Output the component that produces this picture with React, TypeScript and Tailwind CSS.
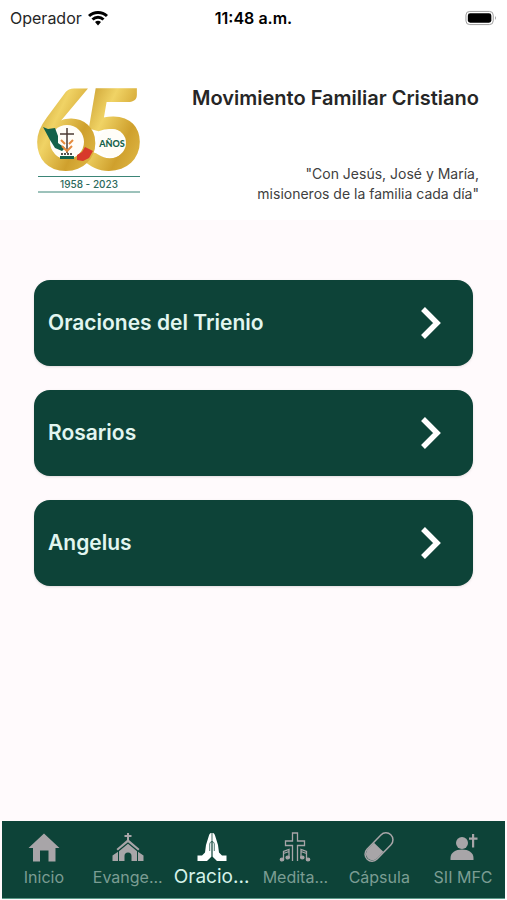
import React from 'react';

type IconProps = { className?: string };

const HomeIcon: React.FC<IconProps> = ({ className }) => (
  <svg viewBox="0 0 32 32" className={className} fill="currentColor" aria-hidden="true">
    <path d="M16 2.500 31.500 17H27.500V30.500H20.500V19.500H12V30.500H5V17H0.500Z" />
  </svg>
);

const ChurchIcon: React.FC<IconProps> = ({ className }) => (
  <svg viewBox="0 0 32 32" className={className} fill="currentColor" aria-hidden="true">
    <path d="M15 2h2v2h2.500v2H17v3l10.500 9-1.300 1.500L16 11.200 5.800 19.500 4.500 18 15 9V6h-2.500V4H15Z" />
    <path d="M16 12.700 25 20.200V30H19.500V25a3.500 3.500 0 0 0-7 0v5H7V20.200Z" />
    <path d="M6 20.800V30H0.500V24.500Z" />
    <path d="M26 20.800V30h5.500V24.500Z" />
  </svg>
);

const PrayIcon: React.FC<IconProps> = ({ className }) => (
  <svg viewBox="0 0 32 32" className={className} fill="currentColor" aria-hidden="true">
    <path d="M15.600 2C14.200 1.500 13.200 3 12.800 5L10 14 9 21.500 6 24.500H1.500V30H11L15.600 25.500Z" />
    <path d="M16.400 2C17.800 1.500 18.800 3 19.200 5L22 14 23 21.500 26 24.500H30.500V30H21L16.400 25.500Z" />
    <path d="M13.700 20V13q0-2 2.300-2.500 2.300.500 2.300 2.500V20M16 10V26" fill="none" stroke="#0d4338" strokeWidth="0.700" />
  </svg>
);

const CrossNotesIcon: React.FC<IconProps> = ({ className }) => (
  <svg viewBox="0 0 32 32" className={className} fill="none" stroke="currentColor" strokeWidth="1.300" aria-hidden="true">
    <path d="M13.500 30V14.500H6.500V10H13.500V2H18.500V10H25.500V14.500H18.500V30" />
    <path d="M4.500 28V20.500L10 18.500V26M4.500 22.500 10 20.500" />
    <path d="M27.500 28V20.500L22 18.500V26M27.500 22.500 22 20.500" />
    <ellipse cx="3" cy="28.500" rx="1.700" ry="1.300" fill="currentColor" />
    <ellipse cx="8.700" cy="26.500" rx="1.700" ry="1.300" fill="currentColor" />
    <ellipse cx="29" cy="28.500" rx="1.700" ry="1.300" fill="currentColor" />
    <ellipse cx="23.300" cy="26.500" rx="1.700" ry="1.300" fill="currentColor" />
  </svg>
);

const PillIcon: React.FC<IconProps> = ({ className }) => (
  <svg viewBox="0 0 32 32" className={className} fill="none" aria-hidden="true">
    <g transform="rotate(-46 16 16)">
      <rect x="-1" y="9" width="34" height="14" rx="7" stroke="currentColor" strokeWidth="1.500" />
      <path d="M15.500 9.500V22.500H6.500a6.500 6.500 0 0 1 0-13Z" fill="currentColor" />
    </g>
  </svg>
);

const PersonCrossIcon: React.FC<IconProps> = ({ className }) => (
  <svg viewBox="0 0 32 32" className={className} fill="currentColor" aria-hidden="true">
    <circle cx="15" cy="12" r="6" />
    <path d="M3.500 29V27C3.500 21.500 8.500 18.500 15 18.500S26.500 21.500 26.500 27V29Z" />
    <path d="M25 3h2.200V6.500h3.300v2.200H27.200V16.500H25V8.700H22V6.500h3Z" />
  </svg>
);

const ChevronIcon: React.FC<IconProps> = ({ className }) => (
  <svg viewBox="0 0 24 36" className={className} fill="none" stroke="currentColor" strokeWidth="5.500" aria-hidden="true">
    <path d="M4 4 18 18 4 32" />
  </svg>
);

const Logo: React.FC<IconProps> = ({ className }) => (
  <svg viewBox="0 -30 108 138" className={className} role="img" aria-label="65 años">
    <defs>
      <linearGradient id="gold" x1="0" y1="0" x2="1" y2="1">
        <stop offset="0.150" stopColor="#c79a2c" />
        <stop offset="0.400" stopColor="#f0d365" />
        <stop offset="0.650" stopColor="#cfa02d" />
        <stop offset="0.900" stopColor="#e3bd4b" />
      </linearGradient>
    </defs>
    <text x="44" y="84" fontSize="113" className="font-['Lato',sans-serif] font-black" fill="url(#gold)">5</text>
    <text x="-3" y="84" fontSize="113" className="font-['Lato',sans-serif] font-black" fill="url(#gold)">6</text>
    <circle cx="31" cy="56" r="17" fill="#fffdf8" />
    <circle cx="76" cy="57" r="14" fill="#fffdf8" />
    <path d="M7 41 12 43 19 42 22 50 22 57 29 62 26 65 19 62 14 54Z" fill="#14614a" />
    <path d="M41 69 46 66 49 61 57 65 53 72 47 75 41 74Z" fill="#d8392b" />
    <path d="M31 42V67M24 48H38" stroke="#4c3b35" strokeWidth="1.500" fill="none" />
    <path d="M25 54 29 58M37 54 33 58M26 60 31 65 36 60" stroke="#e58a3c" strokeWidth="2" fill="none" />
    <path d="M25 68H37" stroke="#59544f" strokeWidth="2" strokeDasharray="2 1" />
    <rect x="24" y="70" width="14" height="3" fill="#14614a" />
    <text x="76" y="61" textAnchor="middle" fontSize="9" className="font-['Lato',sans-serif] font-black" fill="#14614a">AÑOS</text>
    <path d="M2 90.500H104M2 106H104" stroke="#3b8577" strokeWidth="1" />
    <text x="53" y="102" textAnchor="middle" fontSize="10" className="font-['Inter',sans-serif] font-medium" fill="#2c6a5c">1958 - 2023</text>
  </svg>
);

const PRAYERS = ['Oraciones del Trienio', 'Rosarios', 'Angelus'];

const TABS = [
  { label: 'Inicio', Icon: HomeIcon },
  { label: 'Evange...', Icon: ChurchIcon },
  { label: 'Oracio...', Icon: PrayIcon, active: true },
  { label: 'Medita...', Icon: CrossNotesIcon },
  { label: 'Cápsula', Icon: PillIcon },
  { label: 'SII MFC', Icon: PersonCrossIcon },
];

const StatusBar: React.FC = () => (
  <div className="grid grid-cols-3 items-center h-9 px-2.5 text-base text-neutral-800">
    <div className="flex items-center gap-1.5">
      <span>Operador</span>
      <svg viewBox="0 0 20 15" className="w-5 h-4" fill="none" stroke="#000" strokeWidth="3" aria-hidden="true">
        <path d="M1 5.500a13 13 0 0 1 18 0M4.500 9a8 8 0 0 1 11 0" />
        <path d="M7 11.500a4.500 4.500 0 0 1 6 0L10 15Z" fill="#000" stroke="none" />
      </svg>
    </div>
    <span className="text-center font-semibold text-black whitespace-nowrap">11:48 a.m.</span>
    <svg viewBox="0 0 34 16" className="w-8 h-4 justify-self-end" aria-hidden="true">
      <rect x="1" y="1" width="29" height="14" rx="4" fill="none" stroke="#999" />
      <rect x="3" y="3" width="25" height="10" rx="2.500" fill="#000" />
      <path d="M32 6v4q2-2 0-4Z" fill="#999" />
    </svg>
  </div>
);

const App: React.FC = () => {
  return (
    <div className="min-h-screen flex flex-col bg-[#fffafc] font-['Inter',sans-serif]">
      {/* Header */}
      <header className="bg-white pb-4">
        <StatusBar />
        <div className="flex items-start justify-between pl-9 pr-7 pt-5">
          <Logo className="w-27 h-34.5 shrink-0 overflow-visible" />
          <div className="flex flex-col gap-13 text-right pt-7">
            <h1 className="text-xl leading-7 font-semibold text-neutral-800">Movimiento Familiar Cristiano</h1>
            <p className="text-sm leading-5 text-neutral-700">
              "Con Jesús, José y María,<br />
              misioneros de la familia cada día"
            </p>
          </div>
        </div>
      </header>

      {/* Prayer list */}
      <main className="flex-1 flex flex-col gap-6 px-8.5 py-15">
        {PRAYERS.map(name => (
          <button
            key={name}
            className="flex items-center justify-between w-full h-21.5 pl-3.5 pr-7.5 rounded-2xl bg-[#0d4338] text-[#e2f6f0] shadow"
          >
            <span className="text-[21px] leading-8 font-semibold">{name}</span>
            <ChevronIcon className="w-6 h-9 text-white" />
          </button>
        ))}
      </main>

      {/* Bottom navigation */}
      <nav className="grid grid-cols-6 mx-0.5 h-19.5 mb-px bg-[#0d4338] border-b border-[#5c9a8a]">
        {TABS.map(({ label, Icon, active }) => (
          <button key={label} className="flex flex-col items-center pt-2.5 whitespace-nowrap">
            <Icon className={active ? 'w-8 h-8 text-white' : 'w-8 h-8 text-[#a8a5a8]'} />
            <span className={active ? 'text-[19px] leading-7 text-[#d5f2e9]' : 'text-base leading-7 text-[#7b9d93]'}>{label}</span>
          </button>
        ))}
      </nav>
    </div>
  );
};

export default App;
